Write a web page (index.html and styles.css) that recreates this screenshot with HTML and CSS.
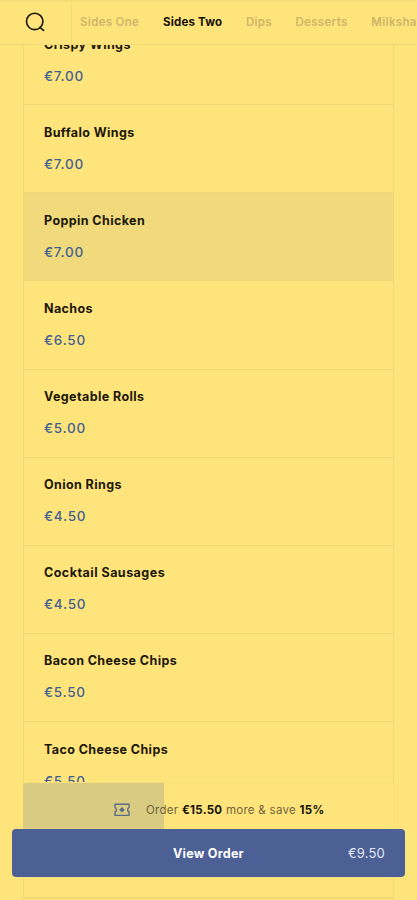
FILE: index.html
```html
<!DOCTYPE html>
<html lang="en">
<head>
<meta charset="utf-8">
<meta name="viewport" content="width=device-width, initial-scale=1">
<title>Menu</title>
<link rel="stylesheet" href="styles.css">
</head>
<body>
<header class="topbar">
  <button class="search" aria-label="Search">
    <svg width="20" height="21" viewBox="0 0 20 21" fill="none" stroke="#171506" stroke-width="1.6" stroke-linecap="round"><circle cx="9.7" cy="9.4" r="8.2"/><path d="M14.8 15.4L18.6 18.4"/></svg>
  </button>
  <nav class="tabs">
    <a class="tab">Sides One</a>
    <a class="tab active">Sides Two</a>
    <a class="tab dips">Dips</a>
    <a class="tab">Desserts</a>
    <a class="tab">Milkshakes</a>
  </nav>
</header>
<main class="content">
  <ul class="list">
    <li class="item"><h3 class="name">Crispy Wings</h3><p class="price">€7.00</p></li>
    <li class="item"><h3 class="name">Buffalo Wings</h3><p class="price">€7.00</p></li>
    <li class="item selected"><h3 class="name">Poppin Chicken</h3><p class="price">€7.00</p></li>
    <li class="item"><h3 class="name">Nachos</h3><p class="price">€6.50</p></li>
    <li class="item"><h3 class="name">Vegetable Rolls</h3><p class="price">€5.00</p></li>
    <li class="item"><h3 class="name">Onion Rings</h3><p class="price">€4.50</p></li>
    <li class="item"><h3 class="name wide">Cocktail Sausages</h3><p class="price">€4.50</p></li>
    <li class="item"><h3 class="name">Bacon Cheese Chips</h3><p class="price">€5.50</p></li>
    <li class="item"><h3 class="name">Taco Cheese Chips</h3><p class="price">€5.50</p></li>
    <li class="item"></li>
  </ul>
</main>
<footer class="dock">
  <div class="offer">
    <div class="progress"></div>
    <svg class="ticket" width="16" height="14" viewBox="0 0 16 14" fill="none" stroke="#5d6b83" stroke-width="1.4" stroke-linejoin="round"><path d="M1 1.2H15V4.6C13.2 5 13.2 8.4 15 8.8V12.4H1V8.8C2.8 8.4 2.8 5 1 4.6Z"/><path d="M8 4L10.8 6.8L8 9.6L5.2 6.8Z" fill="#5d6b83" stroke="none"/></svg>
    <p class="offer-text">Order <b>€15.50</b> more &amp; save <b>15%</b></p>
  </div>
  <button class="order"><span></span><strong>View Order</strong><span class="total">€9.50</span></button>
</footer>
</body>
</html>
```
FILE: styles.css
```css
* { box-sizing: border-box; }
body {
  margin: 0;
  height: 900px;
  overflow: hidden;
  position: relative;
  background: #ffe47c;
  font-family: Inter, "Liberation Sans", sans-serif;
  color: #1b1708;
}
button { border: 0; background: none; padding: 0; font: inherit; }
.topbar {
  display: flex;
  height: 45px;
  border-bottom: 1px solid #efd875;
  background: linear-gradient(#f0d976, #ffe47c 3px);
}
.search {
  display: flex;
  align-items: flex-start;
  width: 72px;
  padding: 12px 0 0 25px;
  border-right: 1px solid #f3dc77;
}
.search svg { display: block; }
.tabs {
  display: flex;
  gap: 23.7px;
  flex: 1;
  overflow: hidden;
  padding-left: 8px;
  line-height: 44px;
}
.tab {
  flex: none;
  font-size: 11.5px;
  font-weight: 600;
  letter-spacing: 0.32px;
  color: #cdb667;
  white-space: nowrap;
}
.tab.active { color: #141104; font-weight: 700; letter-spacing: 0.2px; }
.tab.dips { letter-spacing: 0.25px; }
.content { height: 855px; overflow: hidden; }
.list {
  list-style: none;
  margin: -28px 23px 0;
  padding: 0;
  border: 1px solid #efd875;
  border-top: 0;
}
.item {
  height: 88.15px;
  padding: 18.5px 20px 0;
  border-bottom: 1px solid #efd875;
}
.item.selected { background: #f0da7c; }
.name {
  margin: 0;
  font-size: 12.5px;
  font-weight: 700;
  line-height: 18px;
  letter-spacing: 0.4px;
  white-space: nowrap;
}
.name.wide { letter-spacing: 0.48px; }
.price {
  margin: 13px 0 0;
  font-size: 13.5px;
  font-weight: 500;
  line-height: 19px;
  letter-spacing: 0.75px;
  color: #426091;
}
.dock {
  position: absolute;
  left: 12px;
  right: 12px;
  top: 782px;
}
.offer {
  position: relative;
  display: flex;
  align-items: center;
  height: 51px;
  margin: 0 10px 0 11px;
  padding: 5px 0 0 90px;
  background: #ffe47c;
  border: 1px solid #f8df79;
  border-radius: 3px 3px 0 0;
}
.progress {
  position: absolute;
  left: -1px;
  top: 0;
  width: 141px;
  height: 50px;
  background: #dacb82;
  border-radius: 3px 0 0 0;
}
.ticket { position: relative; margin-right: 16px; }
.offer-text {
  position: relative;
  margin: 0;
  font-size: 11.5px;
  letter-spacing: 0.28px;
  white-space: nowrap;
  color: #70633a;
}
.offer-text b { color: #171405; }
.order {
  position: relative;
  display: grid;
  grid-template-columns: 1fr auto 1fr;
  align-items: center;
  width: 100%;
  height: 48px;
  margin-top: -4px;
  padding: 0 20px;
  border-radius: 4px;
  background: #4c6096;
  color: #fff;
  font-size: 12.5px;
}
.order strong { letter-spacing: 0.25px; }
.total { text-align: right; font-size: 13px; letter-spacing: 0.2px; color: #e2e8f5; }
```
